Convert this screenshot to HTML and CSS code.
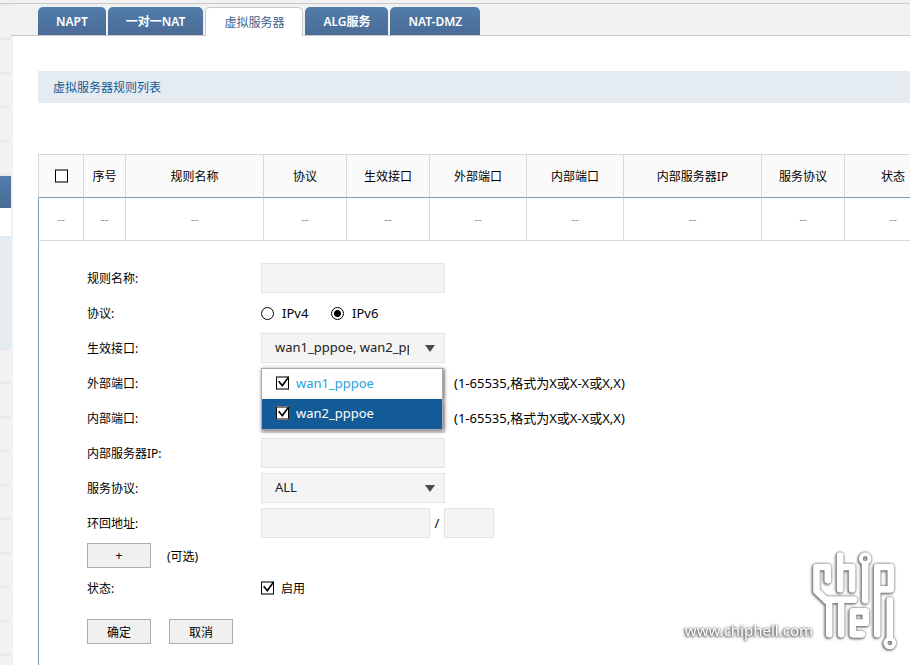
FILE: index.html
```html
<!DOCTYPE html>
<html lang="zh-CN">
<head>
  <meta charset="UTF-8" />
  <meta name="viewport" content="width=device-width, initial-scale=1.0" />
  <title>虚拟服务器</title>
  <link rel="stylesheet" href="styles.css">
</head>
<body>

<div class="topbar"></div>

<div class="layout">
  <aside class="sidebar">
    <div class="item first"></div>
    <div class="item"></div>
    <div class="item"></div>
    <div class="item"></div>
    <div class="item"></div>
    <div class="item"></div>
    <div class="active"></div>
    <div class="submenu"></div>
    <div class="item"></div>
    <div class="item"></div>
    <div class="item"></div>
    <div class="item"></div>
    <div class="item"></div>
    <div class="item"></div>
    <div class="item"></div>
    <div class="item"></div>
    <div class="item"></div>
    <div class="item"></div>
  </aside>

  <div class="page">
    <nav class="tabs">
      <a href="#" class="tab">NAPT</a>
      <a href="#" class="tab">一对一NAT</a>
      <a href="#" class="tab current">虚拟服务器</a>
      <a href="#" class="tab">ALG服务</a>
      <a href="#" class="tab">NAT-DMZ</a>
    </nav>

    <main class="content">
      <h2 class="title">虚拟服务器规则列表</h2>

      <table class="rules">
        <colgroup>
          <col class="c-check"><col class="c-no"><col class="c-name"><col class="c-small"><col class="c-small"><col class="c-port"><col class="c-port"><col class="c-name"><col class="c-small"><col class="c-port">
        </colgroup>
        <thead>
          <tr>
            <th><input type="checkbox" class="check" aria-label="全选"></th>
            <th>序号</th>
            <th>规则名称</th>
            <th>协议</th>
            <th>生效接口</th>
            <th>外部端口</th>
            <th>内部端口</th>
            <th>内部服务器IP</th>
            <th>服务协议</th>
            <th>状态</th>
          </tr>
        </thead>
        <tbody>
          <tr>
            <td>--</td>
            <td>--</td>
            <td>--</td>
            <td>--</td>
            <td>--</td>
            <td>--</td>
            <td>--</td>
            <td>--</td>
            <td>--</td>
            <td>--</td>
          </tr>
        </tbody>
      </table>

      <form class="editor">
        <div class="row">
          <label class="name" for="ruleName">规则名称:</label>
          <input type="text" class="field" id="ruleName">
        </div>
        <div class="row">
          <span class="name">协议:</span>
          <label class="option"><input type="radio" class="radio" name="proto">IPv4</label>
          <label class="option"><input type="radio" class="radio" name="proto" checked>IPv6</label>
        </div>
        <div class="row">
          <label class="name" for="iface">生效接口:</label>
          <div class="dropdown">
            <button type="button" class="field combo" id="iface"><span class="value">wan1_pppoe, wan2_pppoe</span></button>
            <div class="menu">
              <label class="choice"><input type="checkbox" class="check" checked>wan1_pppoe</label>
              <label class="choice selected"><input type="checkbox" class="check" checked>wan2_pppoe</label>
            </div>
          </div>
        </div>
        <div class="row">
          <label class="name" for="outPort">外部端口:</label>
          <input type="text" class="field" id="outPort">
          <span class="hint">(1-65535,格式为X或X-X或X,X)</span>
        </div>
        <div class="row">
          <label class="name" for="inPort">内部端口:</label>
          <input type="text" class="field" id="inPort">
          <span class="hint">(1-65535,格式为X或X-X或X,X)</span>
        </div>
        <div class="row">
          <label class="name" for="serverIp">内部服务器IP:</label>
          <input type="text" class="field" id="serverIp">
        </div>
        <div class="row">
          <label class="name" for="service">服务协议:</label>
          <div class="dropdown">
            <select class="field combo" id="service">
              <option>ALL</option>
            </select>
          </div>
        </div>
        <div class="row">
          <label class="name" for="loopIp">环回地址:</label>
          <input type="text" class="field address" id="loopIp">
          <span class="slash">/</span>
          <input type="text" class="field mask" aria-label="掩码">
        </div>
        <div class="row add">
          <button type="button" class="btn">+</button>
          <span class="optional">(可选)</span>
        </div>
        <div class="row">
          <label class="name" for="enabled">状态:</label>
          <label class="enable"><input type="checkbox" class="check" id="enabled" checked>启用</label>
        </div>
        <div class="actions">
          <button type="button" class="btn">确定</button>
          <button type="button" class="btn">取消</button>
        </div>
      </form>
    </main>
  </div>
</div>

<div class="watermark">
  <span class="site">www.chiphell.com</span>
  <svg class="logo" viewBox="20 20 290 330" aria-hidden="true">
    <g fill="none" stroke="#fff" stroke-width="20" stroke-linecap="round" stroke-linejoin="round">
      <path d="M82 120V80H48V152L86 188V282"/>
      <path d="M76 178H160M122 184V282"/>
      <path d="M119 46V147M119 80H155V147"/>
      <path d="M194 74V180"/>
      <path d="M230 282V80H271V147H234"/>
      <path d="M159 247H196V213H157V282H184"/>
      <path d="M268 180V292"/>
      <circle cx="194" cy="55" r="13" stroke-width="12"/>
      <circle cx="268" cy="308" r="13" stroke-width="12"/>
    </g>
  </svg>
</div>

</body>
</html>
```
FILE: styles.css
```css
* {
  box-sizing: border-box;
}

body {
  margin: 0;
  height: 100vh;
  display: flex;
  flex-direction: column;
  overflow: hidden;
  position: relative;
  background: #fff;
  color: #000;
  font-family: "Noto Sans", "Noto Sans CJK SC", sans-serif;
  font-size: 12px;
}

input, button, select {
  margin: 0;
  font-family: inherit;
}

.topbar {
  flex: none;
  height: 4px;
  background: #f1f1f1;
  border-bottom: 1px solid #c9c9c9;
}

.layout {
  flex: 1;
  min-height: 0;
  display: flex;
  background: #f1f1f1;
}

/* sidebar */
.sidebar {
  flex: 0 0 11px;
  overflow: hidden;
}

.item {
  height: 34px;
  background: #f2f2f4;
  border-bottom: 2px solid #e9e9e7;
}

.item.first {
  height: 2px;
}

.active {
  height: 32px;
  background: linear-gradient(#527dab, #4a6b96);
}

.submenu {
  height: 142px;
  border-top: 28px solid #fff;
  border-bottom: 2px solid #e9e9e7;
  background: #e4ecf2;
}

/* tabs */
.page {
  flex: 1;
  min-width: 0;
  display: flex;
  flex-direction: column;
}

.tabs {
  flex: none;
  display: flex;
  gap: 2px;
  height: 32px;
  padding: 3px 0 0 27px;
  border-bottom: 1px solid #c9c9c9;
}

.tab {
  height: 28px;
  padding: 0 18px;
  border-radius: 5px 5px 0 0;
  background: linear-gradient(#527dab, #4a6b96);
  color: #fff;
  font-weight: 600;
  line-height: 30px;
  text-align: center;
  text-decoration: none;
  white-space: nowrap;
}

.tab.current {
  height: 29px;
  border: 1px solid #c9c9c9;
  border-bottom: none;
  background: #fff;
  color: #3f618c;
  font-weight: 400;
}

/* content */
.content {
  flex: 1;
  min-height: 0;
  display: flex;
  flex-direction: column;
  margin-left: 2px;
  padding: 35px 0 0 25px;
  overflow: hidden;
  background: #fff;
}

.title {
  flex: none;
  margin: 0 0 51px;
  padding: 2px 0 0 15px;
  background: #e4ecf2;
  color: #135b96;
  font-size: 12px;
  font-weight: 400;
  line-height: 30px;
}

.rules {
  flex: none;
  width: 904px;
  table-layout: fixed;
  border-collapse: separate;
  border-spacing: 0;
  border-top: 1px solid #d8d8d8;
}

.c-check { width: 46px; }
.c-no { width: 42px; }
.c-name { width: 138px; }
.c-small { width: 83px; }
.c-port { width: 97px; }

.rules th,
.rules td {
  height: 43px;
  padding: 0;
  border-right: 1px solid #d8d8d8;
  border-bottom: 1px solid #d8d8d8;
  text-align: center;
  vertical-align: middle;
}

.rules th {
  padding-bottom: 1px;
  border-bottom-color: #7b9ab8;
  background: #fafafa;
  font-weight: 400;
}

.rules td {
  color: #999;
}

.rules th:first-child {
  border-left: 1px solid #d8d8d8;
}

.rules td:first-child {
  border-left: 1px solid #7b9ab8;
}

.rules .check {
  display: block;
  margin: 0 auto;
}

/* form */
.editor {
  flex: 1;
  padding: 22px 0 0 48px;
  border-left: 1px solid #7b9ab8;
}

.row {
  display: flex;
  align-items: center;
  height: 30px;
  margin-bottom: 5px;
}

.row.add {
  height: 25px;
}

.name {
  flex: 0 0 174px;
}

.field {
  width: 184px;
  height: 30px;
  padding: 0 13px;
  border: 1px solid #e4e4e4;
  border-radius: 0;
  background: #f4f4f4;
  color: #222;
  font-size: 13px;
}

.option {
  display: flex;
  align-items: center;
  gap: 8px;
  width: 70px;
  font-size: 13px;
}

.radio {
  appearance: none;
  width: 13px;
  height: 13px;
  border: 1px solid #000;
  border-radius: 50%;
}

.radio:checked {
  background: radial-gradient(circle, #000 3px, #fff 4px);
}

.check {
  appearance: none;
  flex: none;
  position: relative;
  width: 13px;
  height: 14px;
  border: 1px solid #000;
  border-top: 2px solid #777;
  border-bottom: 2px solid #777;
  background: #fff;
}

.check:checked::after {
  content: "";
  position: absolute;
  top: -1px;
  left: 1px;
  width: 11px;
  height: 10px;
  background: #000;
  clip-path: polygon(0 48%, 12% 38%, 38% 72%, 88% 0, 100% 8%, 40% 100%);
}

.dropdown {
  position: relative;
}

.combo {
  display: block;
  appearance: none;
  padding-right: 35px;
  padding-bottom: 2px;
  text-align: left;
}

.dropdown::after {
  content: "";
  position: absolute;
  top: 12px;
  right: 10px;
  border: 5px solid transparent;
  border-top: 7px solid #4a4a4a;
  border-bottom: none;
}

.value {
  display: block;
  overflow: hidden;
  white-space: nowrap;
}

.menu {
  position: absolute;
  z-index: 1;
  top: 35px;
  left: 0;
  width: 182px;
  border: 1px solid #aaa;
  background: #fff;
  box-shadow: 1px 1px 4px rgba(0, 0, 0, 0.6);
}

.choice {
  display: flex;
  align-items: center;
  gap: 7px;
  height: 30px;
  padding: 0 0 2px 14px;
  color: #27a3dd;
  font-size: 13px;
}

.choice.selected {
  background: #135b96;
  color: #fff;
}

.hint {
  margin-left: 9px;
  padding-bottom: 2px;
  font-size: 13px;
  white-space: nowrap;
}

.address {
  width: 169px;
}

.slash {
  width: 14px;
  font-size: 13px;
  text-align: center;
}

.mask {
  width: 50px;
}

.btn {
  width: 64px;
  height: 25px;
  padding: 0;
  border: 1px solid #adadad;
  background: #f0f0f0;
  color: #000;
  font-size: 12px;
}

.optional {
  margin-left: 16px;
}

.enable {
  display: flex;
  align-items: center;
  gap: 7px;
}

.actions {
  display: flex;
  gap: 18px;
  margin-top: 16px;
}

/* watermark */
.watermark {
  position: absolute;
  right: 6px;
  bottom: 8px;
  display: flex;
  align-items: flex-end;
  color: #fff;
  filter: drop-shadow(0 0 1px #666) drop-shadow(-1px 1px 1px #777);
  pointer-events: none;
}

.site {
  margin-bottom: 15px;
  font-size: 15px;
  line-height: 24px;
}

.logo {
  width: 97px;
  height: 110px;
  margin-left: -6px;
}
```
